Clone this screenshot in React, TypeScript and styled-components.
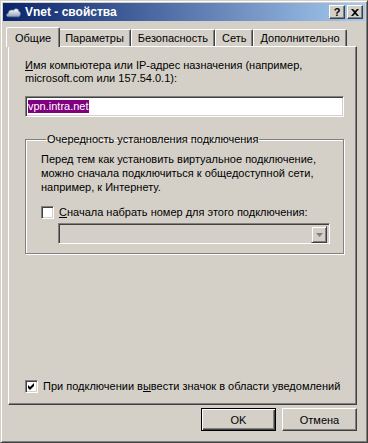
import React from 'react'
import styled, { createGlobalStyle } from 'styled-components'

const face = '#d4d0c8'
const shadow = '#808080'
const dark = '#404040'

const Global = createGlobalStyle`
    html, body {
        margin: 0;
        padding: 0;
        background: ${face};
    }
    body {
        font-family: "Liberation Sans", Arial, sans-serif;
        font-size: 11px;
        color: #000;
    }
`

const Window = styled.div`
    box-sizing: border-box;
    width: 368px;
    height: 443px;
    background: ${face};
    border: 1px solid;
    border-color: ${face} ${dark} ${dark} ${face};
    box-shadow: inset 1px 1px 0 #fff, inset -1px -1px 0 ${shadow};
    padding: 2px;
    display: flex;
    flex-direction: column;
`

const TitleBar = styled.div`
    height: 18px;
    display: flex;
    align-items: center;
    padding: 0 2px 0 3px;
    background: linear-gradient(to right, #0a246a, #a6caf0);
    color: #fff;
    font-weight: bold;
    font-size: 12px;
`

const Title = styled.span`
    flex: 1;
    margin-left: 4px;
`

const CapButton = styled.div`
    box-sizing: border-box;
    width: 16px;
    height: 14px;
    margin-left: 2px;
    background: ${face};
    border: 1px solid;
    border-color: #fff ${dark} ${dark} #fff;
    box-shadow: inset -1px -1px 0 ${shadow};
    color: #000;
    display: flex;
    align-items: center;
    justify-content: center;
    font-size: 11px;
    font-weight: bold;
    line-height: 1;
`

const Body = styled.div`
    flex: 1;
    display: flex;
    flex-direction: column;
    padding: 6px 4px 0 5px;
`

const TabRow = styled.div`
    display: flex;
    align-items: flex-end;
    height: 19px;
    position: relative;
    z-index: 1;
`

const Tab = styled.div<{ $active?: boolean }>`
    box-sizing: border-box;
    height: ${p => (p.$active ? 20 : 17)}px;
    margin: 0 ${p => (p.$active ? -2 : 0)}px ${p => (p.$active ? -1 : 0)}px;
    padding: 0 ${p => (p.$active ? 8 : 6)}px;
    display: flex;
    align-items: center;
    background: ${face};
    border-top: 1px solid #fff;
    border-left: 1px solid #fff;
    border-right: 1px solid ${dark};
    border-top-left-radius: 2px;
    border-top-right-radius: 2px;
    box-shadow: inset -1px 0 0 ${shadow};
    position: relative;
    z-index: ${p => (p.$active ? 2 : 0)};
`

const Panel = styled.div`
    box-sizing: border-box;
    width: 349px;
    height: 359px;
    border: 1px solid;
    border-color: #fff ${dark} ${dark} #fff;
    box-shadow: inset -1px -1px 0 ${shadow};
    padding: 12px 12px 0 16px;
    display: flex;
    flex-direction: column;
`

const Label = styled.div`
    line-height: 13px;
`

const TextBox = styled.div`
    box-sizing: border-box;
    margin-top: 11px;
    height: 21px;
    width: 319px;
    background: #fff;
    border: 1px solid;
    border-color: ${shadow} #fff #fff ${shadow};
    box-shadow: inset 1px 1px 0 ${dark}, inset -1px -1px 0 ${face};
    padding: 3px 2px;
    display: flex;
    align-items: center;
`

const Selected = styled.span`
    background: #800080;
    color: #fff;
    line-height: 13px;
`

const Group = styled.fieldset`
    box-sizing: border-box;
    margin: 16px 0 0 0;
    width: 319px;
    height: 121px;
    border: 1px solid ${shadow};
    box-shadow: 1px 1px 0 #fff, inset 1px 1px 0 #fff;
    padding: 6px 10px 0 15px;
    display: flex;
    flex-direction: column;
    legend {
        padding: 0 1px;
        margin-left: 5px;
        line-height: 13px;
    }
`

const Para = styled.div`
    line-height: 14px;
`

const CheckRow = styled.label<{ $top: number; $bottom?: number }>`
    display: flex;
    align-items: center;
    margin-top: ${p => p.$top}px;
    margin-bottom: ${p => p.$bottom ?? 0}px;
    gap: 5px;
    line-height: 13px;
`

const Box = styled.span`
    box-sizing: border-box;
    width: 13px;
    height: 13px;
    background: #fff;
    border: 1px solid;
    border-color: ${shadow} #fff #fff ${shadow};
    box-shadow: inset 1px 1px 0 ${dark}, inset -1px -1px 0 ${face};
    display: flex;
    align-items: center;
    justify-content: center;
    flex: none;
`

const Combo = styled.div`
    box-sizing: border-box;
    margin: 4px 0 0 17px;
    width: 272px;
    height: 21px;
    background: ${face};
    border: 1px solid;
    border-color: ${shadow} #fff #fff ${shadow};
    box-shadow: inset 1px 1px 0 ${dark}, inset -1px -1px 0 ${face};
    display: flex;
    justify-content: flex-end;
    padding: 2px;
`

const DropBtn = styled.div`
    box-sizing: border-box;
    width: 16px;
    height: 17px;
    background: ${face};
    border: 1px solid;
    border-color: ${face} ${dark} ${dark} ${face};
    box-shadow: inset 1px 1px 0 #fff, inset -1px -1px 0 ${shadow};
    display: flex;
    align-items: center;
    justify-content: center;
`

const Spacer = styled.div`
    flex: 1;
`

const Footer = styled.div`
    display: flex;
    justify-content: flex-end;
    gap: 6px;
    padding: 3px 0 0;
    width: 349px;
`

const Button = styled.button<{ $default?: boolean }>`
    box-sizing: border-box;
    width: 75px;
    height: 23px;
    font-family: inherit;
    font-size: 11px;
    color: #000;
    background: ${face};
    padding: 0;
    border: 1px solid;
    border-color: ${p => (p.$default ? '#000' : `#fff ${dark} ${dark} #fff`)};
    box-shadow: ${p =>
        p.$default
            ? `inset 1px 1px 0 #fff, inset -1px -1px 0 ${dark}, inset -2px -2px 0 ${shadow}`
            : `inset -1px -1px 0 ${shadow}`};
`

const U = styled.span`
    text-decoration: underline;
`

const CloudIcon = () => (
    <svg width="15" height="11" viewBox="0 0 14 10">
        <defs>
            <linearGradient id="cl" x1="0" y1="0" x2="0" y2="1">
                <stop offset="0" stopColor="#ffffff" />
                <stop offset="1" stopColor="#8fa0b8" />
            </linearGradient>
        </defs>
        <path d="M2 9 C0 9 0 6 2 6 C2 3 5 2 7 3 C8 1 12 1 12 4 C14 4 14 8 12 9 Z" fill="url(#cl)" stroke="#6a7890" strokeWidth="0.6" />
    </svg>
)

const Check = () => (
    <svg width="7" height="7" viewBox="0 0 7 7">
        <path d="M0 2 L2 4 L6 0 L6 3 L2 7 L0 5 Z" fill="#000" />
    </svg>
)

export default function App() {
    return (
        <Window>
            <Global />
            <TitleBar>
                <CloudIcon />
                <Title>Vnet - свойства</Title>
                <CapButton>?</CapButton>
                <CapButton>
                    <svg width="8" height="7" viewBox="0 0 8 7">
                        <path d="M0 0h2l2 2 2-2h2L5 3.5 8 7H6L4 5 2 7H0l3-3.5z" fill="#000" />
                    </svg>
                </CapButton>
            </TitleBar>
            <Body>
                <TabRow>
                    <Tab $active>Общие</Tab>
                    <Tab>Параметры</Tab>
                    <Tab>Безопасность</Tab>
                    <Tab>Сеть</Tab>
                    <Tab>Дополнительно</Tab>
                </TabRow>
                <Panel>
                    <Label>
                        <U>И</U>мя компьютера или IP-адрес назначения (например,
                        <br />
                        microsoft.com или 157.54.0.1):
                    </Label>
                    <TextBox>
                        <Selected>vpn.intra.net</Selected>
                    </TextBox>
                    <Group>
                        <legend>Очередность установления подключения</legend>
                        <Para>
                            Перед тем как установить виртуальное подключение,
                            <br />
                            можно сначала подключиться к общедоступной сети,
                            <br />
                            например, к Интернету.
                        </Para>
                        <CheckRow $top={12}>
                            <Box />
                            <span>
                                <U>С</U>начала набрать номер для этого подключения:
                            </span>
                        </CheckRow>
                        <Combo>
                            <DropBtn>
                                <svg width="7" height="4" viewBox="0 0 7 4">
                                    <path d="M0 0h7L3.5 4z" fill={shadow} />
                                </svg>
                            </DropBtn>
                        </Combo>
                    </Group>
                    <Spacer />
                    <CheckRow $top={0} $bottom={11}>
                        <Box>
                            <Check />
                        </Box>
                        <span>
                            При подключении в<U>ы</U>вести значок в области уведомлений
                        </span>
                    </CheckRow>
                </Panel>
                <Footer>
                    <Button $default>OK</Button>
                    <Button>Отмена</Button>
                </Footer>
            </Body>
        </Window>
    )
}
